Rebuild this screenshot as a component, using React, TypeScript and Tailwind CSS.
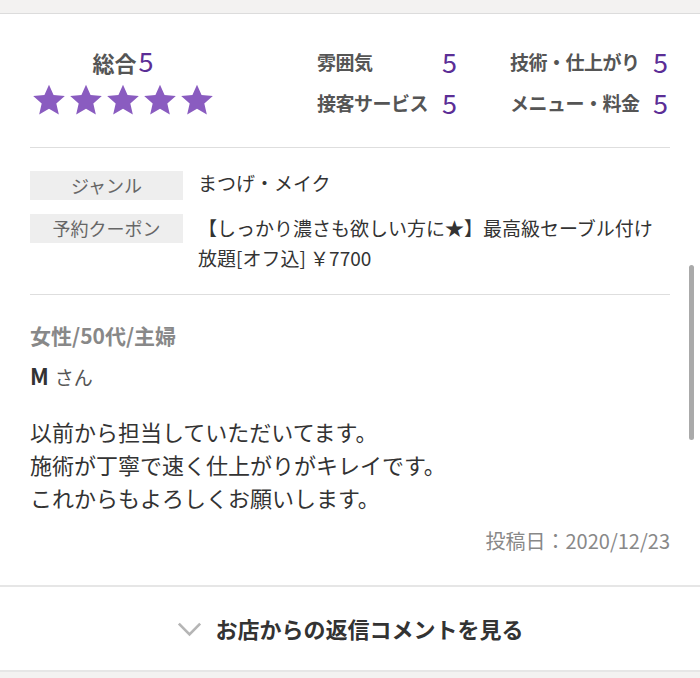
const Star = () => (
  <svg viewBox="0 0 24 24" className="size-[36px] -mx-[2px]">
    <path
      d="M12 1.8l3.05 6.9 7.5.7-5.67 4.98 1.68 7.35L12 17.9l-6.56 3.83 1.68-7.35L1.45 9.4l7.5-.7z"
      fill="#8a5cc0"
    />
  </svg>
);

const ratings = [
  ["雰囲気", "5"],
  ["技術・仕上がり", "5"],
  ["接客サービス", "5"],
  ["メニュー・料金", "5"],
];

const App = () => {
  return (
    <div
      className="relative h-[678px] w-[700px] overflow-hidden bg-white text-[#333]"
      style={{ fontFamily: '"Noto Sans CJK JP", "Noto Sans", sans-serif' }}
    >
      <div className="h-[14px] border-b border-[#dcdcdc] bg-[#f3f2f1]" />

      <div className="px-[30px]">
        <section className="flex h-[134px] items-center border-b border-[#dedede]">
          <div className="flex w-[186px] flex-col items-center pt-[4px]">
            <p className="flex items-baseline text-[22px] font-bold leading-none text-[#555]">
              総合
              <span className="ml-[2px] text-[27px] font-normal text-[#5b2e96]">5</span>
            </p>
            <div className="mt-[8px] flex gap-[5px]">
              <Star />
              <Star />
              <Star />
              <Star />
              <Star />
            </div>
          </div>
          <div className="ml-[101px] grid grid-cols-[140px_158px] gap-x-[53px] gap-y-[12px] pt-[4px]">
            {ratings.map(([label, score]) => (
              <div key={label} className="flex items-center justify-between">
                <span className="text-[19px] font-bold tracking-[-0.5px] text-[#555]">{label}</span>
                <span className="text-[27px] leading-[28px] text-[#5b2e96]">{score}</span>
              </div>
            ))}
          </div>
        </section>

        <section className="space-y-[14px] border-b border-[#dedede] pt-[23px] pb-[21px] text-[19px] leading-[30px]">
          <div className="flex">
            <div className="h-[29px] w-[153px] shrink-0 bg-[#eeeeee] text-center text-[18px] leading-[29px] text-[#666]">
              ジャンル
            </div>
            <p className="ml-[15px] -mt-[3px]">まつげ・メイク</p>
          </div>
          <div className="flex">
            <div className="h-[29px] w-[153px] shrink-0 bg-[#eeeeee] text-center text-[18px] leading-[29px] text-[#666]">
              予約クーポン
            </div>
            <p className="ml-[15px] -mt-[1px] w-[470px]">
              【しっかり濃さも欲しい方に★】最高級セーブル付け放題[オフ込] ￥7700
            </p>
          </div>
        </section>

        <section className="pt-[25px]">
          <p className="text-[21px] font-bold leading-[30px] text-[#888]">女性/50代/主婦</p>
          <p className="mt-[10px] leading-[30px] text-[#333]">
            <span className="text-[22px] font-bold">M</span>
            <span className="ml-[6px] text-[19px] text-[#555]">さん</span>
          </p>
          <div className="mt-[22px] text-[22px] leading-[33px] text-[#333]">
            <p>以前から担当していただいてます。</p>
            <p>施術が丁寧で速く仕上がりがキレイです。</p>
            <p>これからもよろしくお願いします。</p>
          </div>
          <p className="mt-[12px] text-right text-[20px] leading-[30px] text-[#888]">
            投稿日：2020/12/23
          </p>
        </section>
      </div>

      <div className="mt-[29px] flex h-[87px] items-center justify-center gap-[12px] border-y-2 border-[#e6e6e6]">
        <svg viewBox="0 0 28 18" className="h-[16px] w-[27px]">
          <path d="M2 3l12 12L26 3" fill="none" stroke="#b5b5b5" strokeWidth="3" />
        </svg>
        <span className="text-[22px] font-bold text-[#333]">お店からの返信コメントを見る</span>
      </div>
      <div className="h-[20px] bg-[#f3f2f1]" />

      <div className="absolute top-[265px] right-[6px] h-[175px] w-[5px] rounded-full bg-[#aaaaaa]" />
    </div>
  );
};

export default App;
